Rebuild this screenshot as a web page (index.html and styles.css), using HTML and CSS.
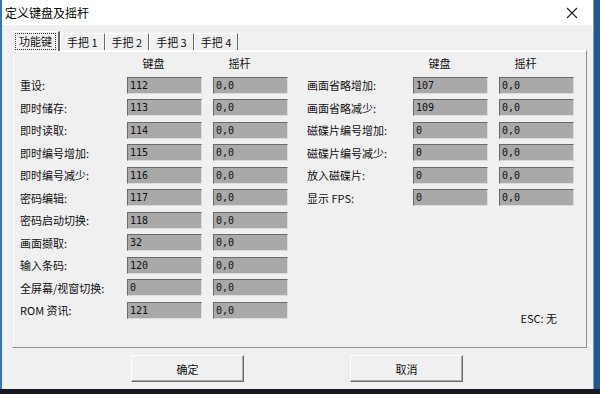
FILE: index.html
```html
<!DOCTYPE html>
<html lang="zh-CN">
<head>
  <meta charset="UTF-8">
  <title>定义键盘及摇杆</title>
  <link rel="stylesheet" href="styles.css">
</head>
<body>
  <div class="window">
    <div class="titlebar">
      <span class="title">定义键盘及摇杆</span>
      <svg class="close" width="12" height="12" viewBox="0 0 12 12">
        <path d="M1 1 L11 11 M11 1 L1 11" stroke="#222" stroke-width="1.1" fill="none"/>
      </svg>
    </div>

    <div class="client">
      <div class="tabs">
        <div class="tab active"><span class="focus">功能键</span></div>
        <div class="tab">手把 1</div>
        <div class="tab">手把 2</div>
        <div class="tab">手把 3</div>
        <div class="tab">手把 4</div>
      </div>

      <div class="panel">
        <div class="group">
          <div class="grid">
            <span></span><span class="head">键盘</span><span class="head">摇杆</span>
            <span class="label">重设:</span><span class="box">112</span><span class="box">0,0</span>
            <span class="label">即时储存:</span><span class="box">113</span><span class="box">0,0</span>
            <span class="label">即时读取:</span><span class="box">114</span><span class="box">0,0</span>
            <span class="label">即时编号增加:</span><span class="box">115</span><span class="box">0,0</span>
            <span class="label">即时编号减少:</span><span class="box">116</span><span class="box">0,0</span>
            <span class="label">密码编辑:</span><span class="box">117</span><span class="box">0,0</span>
            <span class="label">密码启动切换:</span><span class="box">118</span><span class="box">0,0</span>
            <span class="label">画面撷取:</span><span class="box">32</span><span class="box">0,0</span>
            <span class="label">输入条码:</span><span class="box">120</span><span class="box">0,0</span>
            <span class="label">全屏幕/视窗切换:</span><span class="box">0</span><span class="box">0,0</span>
            <span class="label">ROM 资讯:</span><span class="box">121</span><span class="box">0,0</span>
          </div>
        </div>

        <div class="group right">
          <div class="grid">
            <span></span><span class="head">键盘</span><span class="head">摇杆</span>
            <span class="label">画面省略增加:</span><span class="box">107</span><span class="box">0,0</span>
            <span class="label">画面省略减少:</span><span class="box">109</span><span class="box">0,0</span>
            <span class="label">磁碟片编号增加:</span><span class="box">0</span><span class="box">0,0</span>
            <span class="label">磁碟片编号减少:</span><span class="box">0</span><span class="box">0,0</span>
            <span class="label">放入磁碟片:</span><span class="box">0</span><span class="box">0,0</span>
            <span class="label">显示 FPS:</span><span class="box">0</span><span class="box">0,0</span>
          </div>
          <div class="esc">ESC: 无</div>
        </div>
      </div>

      <div class="buttons">
        <button>确定</button>
        <button>取消</button>
      </div>
    </div>
  </div>
  <div class="taskbar"></div>
</body>
</html>
```

FILE: styles.css
```css
html, body { margin: 0; padding: 0; }
body { background: #1b5a93; font-family: "Noto Sans CJK SC", "DejaVu Sans", sans-serif; font-size: 11px; color: #111; width: 600px; height: 394px; overflow: hidden; }

.window { width: 594px; height: 389px; box-sizing: border-box; background: #f0f0f0; border-left: 2px solid #2a78c0; border-right: 1px solid #8a9bb0; }
.titlebar { height: 25px; background: #fff; display: flex; align-items: center; justify-content: space-between; padding: 0 15px 0 3px; }
.title { font-size: 12px; color: #000; }
.close { display: block; }

.client { padding: 6px 0 0 10px; }

.tabs { display: flex; align-items: flex-end; height: 19px; }
.tab { height: 17px; box-sizing: border-box; padding: 0 6px; line-height: 16px; border-top: 1px solid #fff; border-left: 1px solid #fff; border-right: 1px solid #6b6b6b; white-space: nowrap; }
.tab.active { height: 20px; margin-bottom: -1px; padding: 1px 2px 0 2px; background: #f0f0f0; position: relative; z-index: 1; border-right: 2px solid #6b6b6b; }
.focus { display: inline-block; padding: 0 3px; line-height: 15px; border: 1px dotted #333; }

.panel { width: 575px; height: 298px; box-sizing: border-box; display: flex; gap: 19px; padding: 4px 0 21px 7px; border-top: 1px solid #fff; border-left: 1px solid #e8e8e8; border-right: 1px solid #8f8f8f; border-bottom: 1px solid #8f8f8f; box-shadow: inset 1px 1px 0 #fdfdfd; }
.group { display: flex; flex-direction: column; }
.grid { display: grid; grid-template-columns: 96px 75px 75px; grid-template-rows: 16px; grid-auto-rows: 17px; column-gap: 11px; row-gap: 5.5px; align-items: center; }
.right .grid { grid-template-columns: 95px 75px 75px; }

.head { text-align: center; padding-right: 22px; font-size: 11px; }
.label { white-space: nowrap; font-size: 11px; }
.box { height: 17px; box-sizing: border-box; background: #a9a9a9; border-top: 1px solid #696969; border-left: 1px solid #696969; border-right: 1px solid #dcdcdc; border-bottom: 1px solid #dcdcdc; padding-left: 2px; font-family: "DejaVu Sans Mono", monospace; font-size: 10px; line-height: 15px; color: #111; }

.esc { margin-top: auto; text-align: right; padding-right: 17px; font-size: 11px; }

.buttons { display: flex; justify-content: center; gap: 106px; margin-top: 7px; width: 570px; }
button { width: 113px; height: 27px; background: #f0f0f0; border-top: 1px solid #fff; border-left: 1px solid #fff; border-right: 1px solid #6b6b6b; border-bottom: 1px solid #6b6b6b; box-shadow: inset -1px -1px 0 #a8a8a8; font-family: "Noto Sans CJK SC", sans-serif; font-size: 11px; color: #111; padding: 0; }

.taskbar { height: 5px; background: #15181c; }
```
